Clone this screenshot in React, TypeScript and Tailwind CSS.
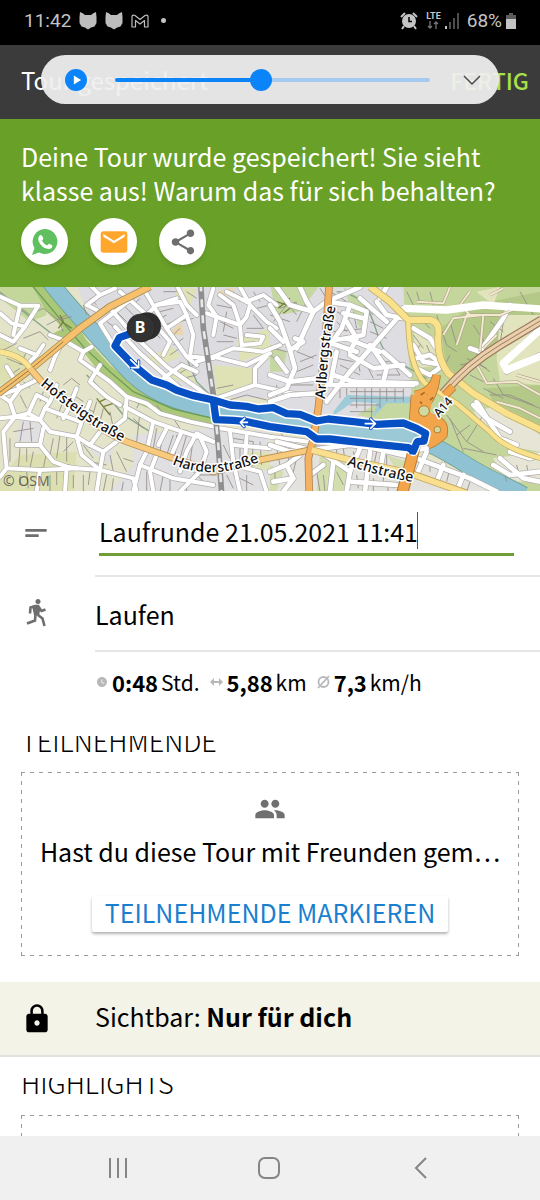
import { MdEmail, MdLock, MdPeople, MdShare, MdShortText, MdWatchLater } from "react-icons/md"

// roads of the western half of the map, drawn with a grey casing and a white core
const westRoads = [
  "M0 35 L60 62 L115 62 L75 125 L40 170 L0 150",
  "M0 85 L35 115 L75 125",
  "M60 62 L40 150",
  "M150 150 L190 165 L250 200 L275 185",
  "M190 165 L165 215 L150 255",
  "M250 200 L240 225 L330 290 L380 335 L375 400 L350 420",
  "M300 240 L270 290 L320 335 L360 360",
  "M380 335 L440 355 L480 385 L570 410 L640 425",
  "M375 365 L460 410 L545 440 L640 470",
  "M460 410 L440 500 L420 540 L400 620",
  "M110 210 L85 235 L110 285 L60 310 L0 330",
  "M60 190 L110 210 L130 180",
  "M20 245 L60 310 L30 350 L0 330",
  "M30 350 L45 395 L85 385 L110 330 L140 345",
  "M0 400 L45 395 L120 405 L150 440 L230 455 L270 480",
  "M85 385 L120 405 L135 370 L200 395 L240 410",
  "M45 395 L10 440 L15 500 L20 550 L120 555 L230 550 L300 555",
  "M50 480 L120 480 L160 530 L200 545 L230 550",
  "M120 480 L130 430",
  "M230 455 L245 510 L300 555 L400 580 L410 620",
  "M270 480 L310 500 L350 470",
  "M310 500 L300 555 L290 620",
  "M20 550 L0 575",
  "M120 555 L110 620",
  "M200 545 L195 620",
  "M230 310 L210 360 L190 400",
  "M270 350 L245 410 L230 455",
  "M170 300 L150 350 L135 370",
  "M300 440 L270 480",
  "M360 20 L390 45 L300 115 L340 180",
  "M270 0 L300 30 L260 60 L290 75",
  "M300 30 L345 10",
  "M330 70 L400 150 L500 245 L600 315 L640 345",
  "M345 125 L420 205 L540 310",
  "M390 45 L440 90 L470 60 L530 40",
  "M430 10 L500 130 L560 215 L590 240",
  "M440 90 L510 170 L490 210",
  "M470 60 L540 50 L560 90 L500 130",
  "M530 0 L560 60 L590 90",
  "M560 90 L580 150 L570 215 L640 220",
  "M490 280 L545 240 L590 260",
  "M620 85 L720 120 L725 180 L780 175 L790 155 L740 150",
  "M640 10 L625 60 L650 95 L640 150",
  "M660 30 L700 60 L720 120",
  "M720 6 L750 60 L740 95 L720 120",
  "M740 50 L790 30 L830 60",
  "M750 60 L800 110 L830 130",
  "M680 20 L740 50",
  "M590 230 L640 215 L740 240 L810 205",
  "M640 215 L700 190 L790 200 L840 180",
  "M800 215 L765 250 L765 300 L650 340",
  "M765 300 L810 310 L900 330",
  "M640 470 L590 445 L560 500 L540 560",
  "M500 430 L475 480",
  "M545 440 L510 520",
  "M600 455 L620 500 L600 560 L540 620",
  "M660 430 L810 455 L1000 480",
  "M690 440 L700 530 L720 620",
  "M740 450 L735 530",
  "M700 480 L810 490",
  "M700 540 L780 560 L800 620",
  "M420 540 L520 580 L640 600",
  "M470 510 L450 560 L460 620",
]

// same for the eastern half
const eastRoads = [
  "M0 60 L30 110 L60 195 L100 170 L75 160",
  "M60 195 L75 250 L50 310 L0 330",
  "M80 190 L130 80 L170 50 L270 6",
  "M0 130 L40 170",
  "M130 80 L60 60 L20 6",
  "M90 6 L110 50 L130 80",
  "M170 50 L240 60 L290 80 L280 150 L230 160",
  "M240 60 L215 130 L190 165",
  "M270 40 L350 110",
  "M190 165 L230 160 L330 200",
  "M280 100 L220 85",
  "M170 350 L240 260 L320 170 L390 90 L400 70",
  "M400 70 L530 75 L640 60 L810 70",
  "M190 270 L250 290 L440 295",
  "M240 210 L310 250 L400 240",
  "M300 180 L350 250 L340 290",
  "M340 200 L420 270",
  "M200 200 L180 300",
  "M170 300 L300 300 L430 300",
  "M0 350 L60 330 L140 325",
  "M0 270 L60 290 L140 280",
  "M20 220 L50 260",
  "M170 170 L260 200",
  "M230 110 L260 160 L240 200",
  "M320 50 L350 90 L400 100",
  "M330 40 L350 6",
  "M430 130 L480 160 L500 190",
  "M430 180 L460 230 L520 240",
  "M440 250 L480 270 L520 240 L480 210 L440 220",
  "M630 200 L700 100 L720 60",
  "M630 200 L600 190",
  "M810 130 L700 235 L710 260 L810 210",
  "M610 360 L650 400 L720 440",
  "M620 350 L690 460 L740 480",
  "M20 470 L120 495 L240 480 L400 500 L470 490",
  "M0 480 L60 500 L110 495",
  "M130 470 L270 480 L440 520 L600 580 L680 620",
  "M150 500 L240 560 L230 620",
  "M160 540 L120 570",
  "M190 530 L180 620",
  "M270 490 L240 560",
  "M300 500 L285 620",
  "M240 590 L380 600",
  "M340 500 L330 560",
  "M470 500 L440 570",
  "M520 540 L500 590",
  "M580 570 L560 620",
  "M0 560 L50 540 L70 580 L40 620",
  "M50 540 L90 510",
  "M10 590 L70 580",
  "M670 540 L720 570 L810 560",
  "M690 520 L760 580 L810 590",
  "M720 500 L780 520 L810 510",
]

const eastTracks = [
  "M560 180 L590 90 L690 90 L740 70",
  "M520 150 L550 100 L640 90",
  "M660 30 L700 10",
  "M600 90 L570 60 L600 20",
  "M640 90 L630 200",
  "M680 150 L640 190",
  "M440 50 L520 55 L540 6",
  "M740 270 L810 290",
  "M620 240 L650 295 L740 290 L810 330",
  "M680 350 L750 370 L810 400",
]

// footpaths, driveways and other hairlines
const westLines =
  "M0 20 L90 90 L130 70 M130 70 L175 105 L215 95 M175 105 L190 140 M140 120 L200 90 M0 200 L50 175 M20 220 L70 240 M60 240 L80 200 M100 250 L130 215 M145 165 L120 140 L70 160 M30 270 L60 250 M130 320 L120 350 M150 310 L190 330 M190 300 L215 280 L240 300 M200 320 L170 400 M220 330 L250 350 M240 360 L280 380 M290 350 L270 420 M310 370 L300 410 M330 380 L340 430 M60 330 L80 370 M90 310 L70 290 M100 340 L90 400 M70 410 L60 470 M90 410 L95 470 M100 430 L40 440 M30 460 L30 530 M60 490 L55 550 M80 490 L80 530 M100 500 L90 550 M140 500 L130 550 M180 450 L170 520 M200 455 L200 530 M160 460 L150 510 M220 470 L190 500 M250 480 L280 520 M270 530 L320 540 M330 510 L340 560 M350 500 L380 560 M370 520 L400 530 M150 570 L150 620 M170 560 L170 600 M220 570 L220 610 M250 570 L250 620 M270 560 L265 600 M320 570 L310 620 M340 580 L335 620 M370 590 L365 620 M60 570 L60 600 M80 560 L85 610 M400 400 L430 430 M420 380 L410 470 M470 430 L460 490 M490 440 L480 500 M520 450 L500 510 M530 450 L525 520 M560 450 L540 520 M580 460 L570 530 M470 360 L500 400 M520 400 L540 430 M420 350 L410 370 M440 560 L440 620 M490 570 L480 620 M510 580 L510 620 M560 590 L560 620 M580 560 L620 600 M600 570 L650 570 M370 60 L420 110 M350 80 L380 110 M320 110 L390 160 M400 60 L420 40 M290 60 L270 40 M260 90 L250 60 M440 110 L480 160 M460 110 L500 90 M470 130 L520 110 M450 190 L500 240 M430 170 L470 150 M500 170 L540 130 M520 180 L550 160 M510 210 L540 190 M540 230 L560 250 M530 270 L580 240 M550 280 L590 270 M480 80 L520 70 M540 110 L580 100 M490 20 L530 20 M560 20 L590 40 M650 60 L700 70 M660 110 L700 130 M670 150 L710 160 M650 170 L700 170 M680 80 L670 140 M700 20 L720 50 M760 20 L780 50 M770 70 L810 60 M760 90 L790 130 M740 130 L790 130 M650 310 L700 300 M670 350 L740 330 L800 345 M700 460 L760 470 M760 470 L755 550 M780 470 L785 540 M720 490 L720 540 M670 480 L690 520 M700 570 L760 600 M740 570 L740 620 M680 570 L700 610"

const eastLines =
  "M0 90 L60 110 M10 110 L50 60 M20 20 L80 90 M30 70 L80 50 M80 110 L110 50 M150 10 L170 40 M180 20 L230 50 M200 80 L240 100 M250 80 L260 130 M200 110 L230 140 M190 140 L290 130 M300 110 L340 130 M300 140 L350 160 M280 60 L310 90 M10 190 L50 200 M0 210 L40 240 M80 200 L130 220 M90 230 L140 210 M80 260 L130 240 M60 300 L130 300 M20 300 L20 340 M200 220 L250 230 M210 240 L270 270 M260 210 L270 260 M280 220 L310 280 M330 230 L380 230 M320 270 L390 270 M360 220 L390 270 M210 300 L210 340 M230 300 L230 330 M240 320 L400 320 M240 340 L400 340 M240 360 L330 360 M260 300 L260 370 M285 310 L285 380 M305 290 L305 400 M330 310 L330 370 M350 310 L350 350 M375 310 L375 350 M400 310 L400 350 M240 380 L310 380 M430 150 L460 190 M470 180 L490 230 M430 210 L450 180 M450 100 L480 130 M410 20 L430 60 M440 20 L450 55 M480 20 L490 60 M500 90 L530 180 L560 200 M540 210 L520 250 L560 270 M570 240 L620 230 L660 260 M590 220 L650 250 M600 270 L640 290 M620 210 L660 190 M540 110 L560 180 M660 110 L700 140 M610 120 L650 180 M750 20 L790 90 M700 110 L690 180 M670 280 L700 330 L760 350 L810 370 M640 310 L700 340 M660 330 L720 330 L790 360 M580 300 L620 330 M750 300 L800 320 M540 400 L580 500 M530 390 L590 470 L640 500 M590 470 L640 390 M560 450 L600 420 M580 490 L680 510 M30 440 L50 470 M60 480 L55 530 M20 490 L30 540 M80 520 L60 600 M140 480 L170 520 M200 490 L200 520 M220 490 L225 530 M250 500 L260 540 M320 500 L310 550 M350 510 L350 550 M140 560 L150 620 M160 570 L165 620 M200 560 L220 600 M260 570 L265 610 M310 580 L310 620 M340 570 L340 600 M350 590 L355 620 M430 520 L500 550 M450 580 L520 600 M480 530 L480 560 M540 550 L530 590 M600 590 L590 620 M700 550 L710 590 M740 540 L750 580 M770 540 L780 590 M15 560 L15 600"

const route =
  "M425 132 L380 150 L358 158 L345 183 L398 238 L455 285 L500 300 L530 316 L580 332 L640 345 L690 360 L740 364 L775 372 L820 368 L860 386 L900 388 L950 408 L985 402 L1060 410 L1130 418 L1210 414 L1250 430 L1277 445 L1272 468 L1252 470 L1240 498 L1225 488 L1110 476 L990 462 L950 462 L920 440 L860 432 L810 425 L740 410 L700 406 L648 404 L640 345"

function Roads({ paths, casing, core }: { paths: string[]; casing: number; core: number }) {
  return (
    <g fill="none" strokeLinejoin="round" strokeLinecap="round">
      {paths.map((d) => (
        <path key={d} d={d} stroke="#b0acac" strokeWidth={casing} />
      ))}
      {paths.map((d) => (
        <path key={d} d={d} stroke="#ffffff" strokeWidth={core} />
      ))}
    </g>
  )
}

function TourMap() {
  return (
    <svg viewBox="0 0 540 204" className="block w-full bg-[#e3e4c9]" role="img" aria-label="Tour">
      <g transform="translate(0 -2) scale(0.33333)">
        {/* land use */}
        <path d="M0 0 H120 L140 90 L90 110 L0 40Z" fill="#c3d79a" />
        <path d="M95 0 L150 0 L260 165 L330 240 L400 300 L470 340 L640 385 V425 L540 410 L400 350 L320 290 L250 200 L150 150 L190 130 L140 80Z" fill="#abc878" />
        <path d="M0 160 L70 200 L100 260 L40 290 L0 300Z M60 510 L230 500 L220 620 H0 V580Z" fill="#dcdfb0" />
        <path d="M230 0 H810 V340 L640 335 L540 310 L420 250 L270 100Z" fill="#dddce0" />
        <path d="M400 450 L640 430 L810 440 V620 H330 L400 540Z M60 400 L130 420 L120 470 L50 470Z M250 480 L340 490 L330 540Z" fill="#e0dfe1" />
        <path d="M640 240 L760 250 V300 L650 335Z M440 215 L520 185 L540 215 L470 245Z M530 10 L590 10 L570 60 L520 50Z M710 160 L810 130 V200 L720 230Z M740 500 H810 V560 L740 540Z M490 270 L560 245 L600 310Z" fill="#dfe2b5" />
        <path d="M650 20 L700 6 L700 40Z M500 150 L545 110 L550 150Z" fill="#ead7b0" />

        <path d="M810 0 H1230 L1250 350 L1230 430 L810 380Z" fill="#dedde1" />
        <path d="M810 0 H960 L900 80 L830 90Z M810 180 L860 200 L850 260 L810 260Z M1070 390 L1160 340 L1230 350 L1230 420Z M1030 6 L1110 60 L1080 130 L1050 60Z" fill="#c6d8a2" />
        <path d="M1210 0 H1620 V620 H1500 L1300 500 L1240 420 L1230 260 L1215 110Z" fill="#c5d69c" />
        <path d="M1320 130 L1420 60 L1620 20 V110 L1450 200 L1380 280 L1340 240Z M1460 310 L1620 300 V420 L1480 350Z" fill="#b4c987" />
        <path d="M1500 90 L1620 90 V300 L1500 290 L1490 220Z M1240 130 L1310 160 L1330 240 L1250 250Z M1430 20 L1500 6 L1480 60Z" fill="#e2e4bd" />
        <path d="M1420 380 L1500 360 L1620 450 V500 L1500 480Z M1480 520 L1620 500 V590 L1520 590Z" fill="#e6e5d6" />
        <path d="M810 470 L1240 500 L1500 620 H810Z" fill="#e3e2dc" />
        <path d="M960 500 L1060 520 L1040 620 H950Z M1160 510 L1220 530 L1200 570Z M810 540 L850 560 L830 620 H810Z" fill="#d3deae" />

        {/* river, side arm and harbour */}
        <path d="M150 -10 C200 60 300 160 370 240 S520 350 640 375 S1000 430 1140 445 S1320 490 1400 540 S1520 600 1570 630" fill="none" stroke="#6fa08c" strokeWidth="52" />
        <path d="M150 -10 C200 60 300 160 370 240 S520 350 640 375 S1000 430 1140 445 S1320 490 1400 540 S1520 600 1570 630" fill="none" stroke="#8fc3d3" strokeWidth="47" />
        <path d="M1000 380 L1040 330 L1240 335 V355 L1160 355 L1120 395 L1130 355 L1060 350 L1000 392Z" fill="#9fcbd8" />
        <path d="M760 355 L940 400 L1230 425 L1250 470 L1100 465 L800 415Z" fill="#9bc9d6" />
        <path d="M95 0 L250 185 L330 260 L400 320 L520 372 L640 400" fill="none" stroke="#6c9c5a" strokeWidth="4" />
        <path d="M0 25 L160 150 L240 190 M260 270 L320 330 L370 390 L450 440 M1010 20 C1130 30 1120 150 1150 190 S1230 250 1280 280 M560 220 L590 290 L640 340 M990 300 L1250 295" fill="none" stroke="#83a58a" strokeWidth="4" />

        <path d={westLines} fill="none" stroke="#938a88" strokeWidth="2.5" />
        <path d={eastLines} fill="none" stroke="#938a88" strokeWidth="2.5" transform="translate(810 0)" />
        <path d="M180 90 L190 110 L175 130 M185 110 L215 130 M290 340 L330 390 M300 350 L320 340 M310 365 L340 355 M830 50 L890 70 M835 70 L870 40 M850 85 L890 55" stroke="#77833c" strokeWidth="4" fill="none" />

        <Roads paths={westRoads} casing={16} core={12} />
        <g transform="translate(810 0)">
          <Roads paths={eastRoads} casing={18} core={14} />
          <g fill="none" strokeLinejoin="round">
            {eastTracks.map((d) => (
              <path key={d} d={d} stroke="#a89c84" strokeWidth="9" />
            ))}
            {eastTracks.map((d) => (
              <path key={d} d={d} stroke="#f3e8d0" strokeWidth="6" />
            ))}
          </g>
        </g>
        <path d="M1210 70 L1340 75 L1450 60 L1625 72 M1625 130 L1510 235 L1520 255 L1625 212" fill="none" stroke="#ffffff" strokeWidth="22" strokeLinejoin="round" />

        {/* main roads */}
        <g fill="none" strokeLinejoin="round">
          <path d="M-5 325 L95 250 L240 130 L330 65 L450 5" stroke="#a58c58" strokeWidth="23" />
          <path d="M-5 325 L95 250 L240 130 L330 65 L450 5" stroke="#f6c06c" strokeWidth="18" />
          <path d="M-5 325 L95 250 L190 170" stroke="#8d7a48" strokeWidth="3" />
          <path d="M-5 200 C40 205 75 225 90 250" stroke="#b5a46a" strokeWidth="19" />
          <path d="M-5 200 C40 205 75 225 90 250" stroke="#fae492" strokeWidth="15" />
          <path d="M90 250 L125 290 C200 350 300 440 380 470 L515 518 L640 560 L780 525 L930 495" stroke="#ba9459" strokeWidth="21" />
          <path d="M90 250 L125 290 C200 350 300 440 380 470 L515 518 L640 560 L780 525 L930 495" stroke="#f8ca7d" strokeWidth="16" />
          <path d="M988 -5 L975 180 L955 370 L940 460 L925 520 L928 630" stroke="#b08550" strokeWidth="23" />
          <path d="M988 -5 L975 180 L955 370 L940 460 L925 520 L928 630" stroke="#f4b262" strokeWidth="18" />
          <path d="M935 495 L1050 525 L1230 565 L1400 625" stroke="#c2a867" strokeWidth="22" />
          <path d="M935 495 L1050 525 L1230 565 L1400 625" stroke="#fadf8e" strokeWidth="17" />
          <path d="M1110 5 L1170 50 L1225 105 L1290 105 Q1320 110 1315 150 Q1310 220 1345 265 L1420 325 L1520 385 L1625 435" stroke="#c4b16d" strokeWidth="23" />
          <path d="M1225 105 Q1225 240 1275 295 L1370 355 L1470 440 Q1510 490 1625 520" stroke="#c4b16d" strokeWidth="18" />
          <path d="M1110 5 L1170 50 L1225 105 L1290 105 Q1320 110 1315 150 Q1310 220 1345 265 L1420 325 L1520 385 L1625 435" stroke="#fae28c" strokeWidth="18" />
          <path d="M1225 105 Q1225 240 1275 295 L1370 355 L1470 440 Q1510 490 1625 520" stroke="#fae28c" strokeWidth="13" />
          <path d="M1330 325 Q1400 240 1500 180 L1625 105" stroke="#9b7860" strokeWidth="28" />
          <path d="M1330 325 Q1400 240 1500 180 L1625 105" stroke="#ead0aa" strokeWidth="21" />
          <path d="M1330 325 Q1400 240 1500 180 L1625 105" stroke="#9b7860" strokeWidth="3" />
          {/* motorway junction */}
          <path d="M1245 330 Q1300 320 1310 270 M1245 330 L1240 400 L1260 440 M1310 270 Q1300 350 1260 370 Q1240 400 1280 400 M1280 400 Q1340 400 1330 450 Q1310 470 1285 480 M1335 330 L1360 305" stroke="#b87a2f" strokeWidth="26" />
          <path d="M1245 330 Q1300 320 1310 270 M1245 330 L1240 400 L1260 440 M1310 270 Q1300 350 1260 370 Q1240 400 1280 400 M1280 400 Q1340 400 1330 450 Q1310 470 1285 480 M1335 330 L1360 305" stroke="#f2a54a" strokeWidth="21" />
          <path d="M1245 330 H1300 L1290 380 L1330 410 L1320 450 L1280 480 L1250 430Z" fill="#f2a54a" />
          <path d="M1245 480 L1230 540 L1205 630" stroke="#b87a2f" strokeWidth="36" />
          <path d="M1245 480 L1230 540 L1205 630" stroke="#f2a54a" strokeWidth="30" />
        </g>
        <circle cx="1272" cy="378" r="16" fill="#cfdaa0" stroke="#b87a2f" strokeWidth="3" />
        <circle cx="1312" cy="434" r="10" fill="#cfdaa0" stroke="#b87a2f" strokeWidth="3" />
        <path d="M1262 330 l12 -8 M1290 345 l10 -8 M1260 350 l6 6" stroke="#a96a25" strokeWidth="5" />

        {/* railway */}
        <path d="M602 -5 L610 130 L640 330 L655 480 L665 625" fill="none" stroke="#8f8f8f" strokeWidth="17" />
        <path d="M602 -5 L610 130 L640 330 L655 480 L665 625" fill="none" stroke="#e8e8e8" strokeWidth="8" strokeDasharray="24 24" />

        {/* recorded track */}
        <g fill="none" strokeLinejoin="round">
          <path d={route} stroke="#ffffff" strokeWidth="31" />
          <path d={route} stroke="#0650c4" strokeWidth="22" />
          <path d="M1238 485 V508" stroke="#0650c4" strokeWidth="20" />
          <g strokeLinecap="round">
            <path d="M392 224 L414 246 M416 228 V248 H394 M742 412 H722 M734 400 L721 412 L732 425 M1096 416 H1124 M1112 402 L1126 416 L1112 430" stroke="#0650c4" strokeWidth="10" />
            <path d="M392 224 L414 246 M416 228 V248 H394 M742 412 H722 M734 400 L721 412 L732 425 M1096 416 H1124 M1112 402 L1126 416 L1112 430" stroke="#ffffff" strokeWidth="5" />
          </g>
        </g>
        <circle cx="442" cy="123" r="41" fill="#2d2d2d" />
        <circle cx="423" cy="129" r="42" fill="#323232" stroke="#252525" strokeWidth="2" />
      </g>

      <path id="hofsteig" d="M40 98 L62 116 L97 141 L132 160" fill="none" />
      <path id="harder" d="M172 177 Q214 196 268 171" fill="none" />
      <path id="arlberg" d="M325 112 L329 60 L337 10" fill="none" />
      <path id="ach" d="M347 178 Q380 190 425 197" fill="none" />
      <g
        className="text-[14px] font-medium"
        fontFamily="'Noto Sans', sans-serif"
        fill="#111111"
        stroke="#ffffff"
        strokeWidth="3"
        strokeLinejoin="round"
        paintOrder="stroke"
      >
        <text><textPath href="#hofsteig">Hofsteigstraße</textPath></text>
        <text><textPath href="#harder">Harderstraße</textPath></text>
        <text><textPath href="#arlberg">Arlbergstraße</textPath></text>
        <text><textPath href="#ach">Achstraße</textPath></text>
        <text className="text-[12px]" transform="translate(439 131) rotate(-48)">A14</text>
      </g>
      <text x="3" y="199" className="text-[14px]" fontFamily="'Noto Sans', sans-serif" fill="#3f3f3f" fillOpacity="0.75">© OSM</text>
      <text x="140" y="46" textAnchor="middle" className="text-[16px] font-bold" fontFamily="'Noto Sans', sans-serif" fill="#ffffff">B</text>
    </svg>
  )
}

function CatIcon() {
  return (
    <svg viewBox="0 0 18 18" className="size-[18px] fill-[#bdbdbd]">
      <path d="M1 0 Q4 1 6 3 H12 Q14 1 17 0 L17.500 5 V11 L15.500 14.500 Q12 15 9 17.500 Q6 15 2.500 14.500 L.5 11 V5Z" />
    </svg>
  )
}

function StatusBar() {
  return (
    <div className="flex h-[45px] shrink-0 items-center justify-between bg-black px-6 pb-1 font-[Roboto,sans-serif] text-[19px] text-[#c4c4c4]">
      <div className="flex items-center gap-2">
        <span>11:42</span>
        <CatIcon />
        <CatIcon />
        <svg viewBox="0 0 18 14" className="h-[14px] w-[18px] fill-none stroke-[#bdbdbd]" strokeWidth="1.2" strokeLinejoin="round">
          <path d="M1 13 V2 Q2 .5 4 1.5 L9 5.5 L14 1.5 Q16 .5 17 2 V13 H13.500 V6.500 L9 10 L4.500 6.500 V13Z" />
        </svg>
        <span className="ml-1 size-[5px] rounded-full bg-[#c4c4c4]" />
      </div>
      <div className="flex items-center">
        <svg viewBox="0 0 18 18" className="mr-2 size-[18px] fill-none stroke-[#c4c4c4]" strokeWidth="2">
          <circle cx="9" cy="9" r="6" fill="#c4c4c4" />
          <path d="M1 5 L5 1 M17 5 L13 1 M4 14 L2 17 M14 14 L16 17" />
          <path d="M9 5 V9.500 H12" stroke="#000000" strokeWidth="1.500" />
        </svg>
        <div className="mr-1 flex flex-col items-center">
          <span className="text-[9px] leading-[9px] font-bold">LTE</span>
          <svg viewBox="0 0 12 8" className="h-2 w-3 fill-none stroke-[#777777]" strokeWidth="1.300">
            <path d="M3 0 V7 M1 5 L3 7 L5 5 M9 8 V1 M7 3 L9 1 L11 3" />
          </svg>
        </div>
        <svg viewBox="0 0 14 16" className="mr-2 h-4 w-[14px] fill-[#4d4d4d]">
          <path d="M0 13 h2 v3 h-2z" fill="#c4c4c4" />
          <path d="M4 9 h2 v7 h-2z M8 5 h2 v11 h-2z M12 0 h2 v16 h-2z" />
        </svg>
        <span className="mr-1">68%</span>
        <svg viewBox="0 0 10 16" className="h-4 w-[10px]">
          <path d="M3 0 h4 v2 h3 v4 h-10 v-4 h3z" fill="#5c5c5c" />
          <path d="M0 6 h10 v10 h-10z" fill="#c4c4c4" />
        </svg>
      </div>
    </div>
  )
}

function PlayerOverlay() {
  return (
    <div className="absolute inset-x-[41px] top-[10px] flex h-[49px] items-center rounded-full bg-[#efefef]/94 pr-[17px] pl-6">
      <button aria-label="Play" className="flex size-[22px] items-center justify-center rounded-full bg-[#0a84f8]">
        <svg viewBox="0 0 10 12" className="ml-[2px] h-3 w-[9px] fill-white">
          <path d="M1 1 L9 6 L1 11Z" />
        </svg>
      </button>
      <input
        type="range"
        aria-label="Position"
        defaultValue={46}
        className="mr-[32px] ml-[28px] h-[22px] min-w-0 flex-1 appearance-none bg-transparent [&::-webkit-slider-runnable-track]:h-1 [&::-webkit-slider-runnable-track]:rounded-full [&::-webkit-slider-runnable-track]:bg-[linear-gradient(90deg,#0a84f8_46%,#a3c9ec_46%)] [&::-webkit-slider-thumb]:mt-[-9px] [&::-webkit-slider-thumb]:size-[22px] [&::-webkit-slider-thumb]:appearance-none [&::-webkit-slider-thumb]:rounded-full [&::-webkit-slider-thumb]:bg-[#0a84f8]"
      />
      <button aria-label="Schließen">
        <svg viewBox="0 0 20 20" className="size-5 fill-none stroke-[#4a4a4a]" strokeWidth="1.500">
          <path d="M2 6 L10 14 L18 6" />
        </svg>
      </button>
    </div>
  )
}

function WhatsAppIcon() {
  return (
    <svg viewBox="0 0 26 26" className="size-[26px]">
      <path d="M13.500 0 A12.500 12.500 0 1 1 7 23.500 L0 26 L2.500 19 A12.500 12.500 0 0 1 13.500 0Z" fill="#60c060" />
      <path d="M7.500 6.500 Q9.500 5 10.500 7.500 L11.300 9.500 Q11 10.800 10 11.700 Q11.800 15 15.200 16.600 L17 14.700 Q20 15.500 20.500 17 Q20 20 16.500 20 Q9.500 19 6.500 12 Q5.600 8.500 7.500 6.500Z" fill="#ffffff" />
    </svg>
  )
}

const shareButton = "flex size-[47px] items-center justify-center rounded-full bg-white shadow-md"

const dashedBox =
  "[background-image:linear-gradient(90deg,#9a9a9a_40%,transparent_0),linear-gradient(90deg,#9a9a9a_40%,transparent_0),linear-gradient(#9a9a9a_40%,transparent_0),linear-gradient(#9a9a9a_40%,transparent_0)] [background-position:0_0,0_100%,0_0,100%_0] [background-repeat:repeat-x,repeat-x,repeat-y,repeat-y] [background-size:9px_1px,9px_1px,1px_9px,1px_9px]"

const sectionTitle = "overflow-hidden pb-2 text-[27px] leading-[9px] font-light"

export default function App() {
  return (
    <div className="flex h-screen flex-col overflow-hidden bg-white font-['Noto_Sans_CJK_KR',sans-serif] text-[25px] leading-[34px] text-black">
      <StatusBar />

      <header className="relative flex h-[74px] shrink-0 items-center justify-between bg-[#3b3b3b] pr-[11px] pb-1 pl-[21px]">
        <h1 className="text-[24px] text-white">Tour gespeichert</h1>
        <button className="text-[23px] font-medium text-[#a8e04a]">FERTIG</button>
        <PlayerOverlay />
      </header>

      <main className="min-h-0 flex-1 overflow-hidden">
        <section className="bg-[#69a128] px-[21px] pt-[20px] pb-[22px] text-white">
          <p>Deine Tour wurde gespeichert! Sie sieht klasse aus! Warum das für sich behalten?</p>
          <div className="mt-[11px] flex gap-[22px]">
            <button aria-label="WhatsApp" className={shareButton}>
              <WhatsAppIcon />
            </button>
            <button aria-label="E-Mail" className={shareButton}>
              <MdEmail className="size-8 text-[#ffa72c]" />
            </button>
            <button aria-label="Teilen" className={shareButton}>
              <MdShare className="size-[30px] text-[#6e6e6e]" />
            </button>
          </div>
        </section>

        <TourMap />

        <div className="flex h-[86px]">
          <label htmlFor="tour-name" className="w-[95px] shrink-0 pt-[26px] pl-[20px]">
            <MdShortText className="size-8 text-[#6e6e6e]" />
          </label>
          <div className="flex-1 border-b-2 border-[#e6e6e6] pr-[26px] pl-1">
            <div className="mt-[21px] grid border-b-3 border-[#6f9f36] pb-1">
              <input
                id="tour-name"
                defaultValue="Laufrunde 21.05.2021 11:41"
                className="h-[37px] min-w-0 outline-none [grid-area:1/1]"
              />
              {/* text cursor */}
              <span aria-hidden="true" className="ml-[318px] w-px bg-[#555555] [grid-area:1/1]" />
            </div>
          </div>
        </div>

        <div className="flex h-[75px] items-center">
          <div className="w-[95px] shrink-0 pb-1 pl-[26px]">
            <svg viewBox="0 0 22 28" className="h-7 w-[22px] fill-none stroke-[#6e6e6e]" strokeWidth="2.600">
              <circle cx="12" cy="2.600" r="2.500" fill="#6e6e6e" stroke="none" />
              <path d="M6 7 L9 5.800 H13 L14.500 9 L13 17 L8 16Z" fill="#6e6e6e" stroke="none" />
              <path d="M8 7.500 L4.500 8.500 L4 14.500 M13 8.500 L15.500 12 L19.500 10.500 M9.500 15 L9 21.500 L1 24.500 M12 16 L16.500 19.500 L18.500 27" />
            </svg>
          </div>
          <div className="flex h-full flex-1 items-center border-b-2 border-[#e6e6e6]">Laufen</div>
        </div>

        <div className="flex items-center pt-[13px] pl-[96px] text-[22px]">
          <MdWatchLater className="mr-1 size-3 text-[#b8b8b8]" />
          <b>0:48</b>
          <span className="ml-[3px] text-[21px]">Std.</span>
          <svg viewBox="0 0 13 10" className="mr-1 ml-[10px] h-[10px] w-[13px] fill-[#b8b8b8]">
            <path d="M0 5 L4 1 V4 H9 V1 L13 5 L9 9 V6 H4 V9Z" />
          </svg>
          <b>5,88</b>
          <span className="ml-[3px] text-[21px]">km</span>
          <svg viewBox="0 0 13 14" className="mr-1 ml-[10px] h-[14px] w-[13px] fill-none stroke-[#b8b8b8]" strokeWidth="1.800">
            <circle cx="6.500" cy="7" r="5" />
            <path d="M1 13 L12 1" />
          </svg>
          <b>7,3</b>
          <span className="ml-[3px] text-[21px]">km/h</span>
        </div>

        <section className="mt-[37px] px-[21px]">
          <h2 className={sectionTitle}>TEILNEHMENDE</h2>
          <div className={`mt-[19px] flex h-[184px] flex-col items-center px-[20px] pt-[21px] ${dashedBox}`}>
            <MdPeople className="size-8 shrink-0 text-[#707070]" />
            <p className="mt-[9px] whitespace-nowrap">Hast du diese Tour mit Freunden gem…</p>
            <button className="mt-[28px] h-[36px] rounded-xs bg-white px-[13px] pb-1 leading-[32px] text-[#1b7fd0] shadow-[0_2px_3px_rgba(0,0,0,0.3)]">
              TEILNEHMENDE MARKIEREN
            </button>
          </div>
        </section>

        <div className="mt-[26px] flex h-[75px] items-center border-b-2 border-[#e2e2dc] bg-[#f3f3e7]">
          <div className="w-[95px] pl-[21px]">
            <MdLock className="size-8" />
          </div>
          <p className="pb-[5px]">
            Sichtbar: <b>Nur für dich</b>
          </p>
        </div>

        <section className="mt-[21px] px-[21px]">
          <h2 className={sectionTitle}>HIGHLIGHTS</h2>
          <div className={`mt-[20px] h-[184px] ${dashedBox}`} />
        </section>
      </main>

      <nav className="flex h-[64px] shrink-0 items-center justify-between bg-[#f0f0f0] px-[108px]">
        <button aria-label="Letzte Apps">
          <svg viewBox="0 0 20 20" className="size-5 fill-none stroke-[#858585]" strokeWidth="2">
            <path d="M2 0 V20 M10 0 V20 M18 0 V20" />
          </svg>
        </button>
        <button aria-label="Startseite">
          <svg viewBox="0 0 22 22" className="size-[22px] fill-none stroke-[#858585]" strokeWidth="2">
            <rect x="1" y="1" width="20" height="20" rx="6" />
          </svg>
        </button>
        <button aria-label="Zurück">
          <svg viewBox="0 0 22 22" className="size-[22px] fill-none stroke-[#858585]" strokeWidth="2">
            <path d="M16 1 L6 11 L16 21" />
          </svg>
        </button>
      </nav>
    </div>
  )
}
